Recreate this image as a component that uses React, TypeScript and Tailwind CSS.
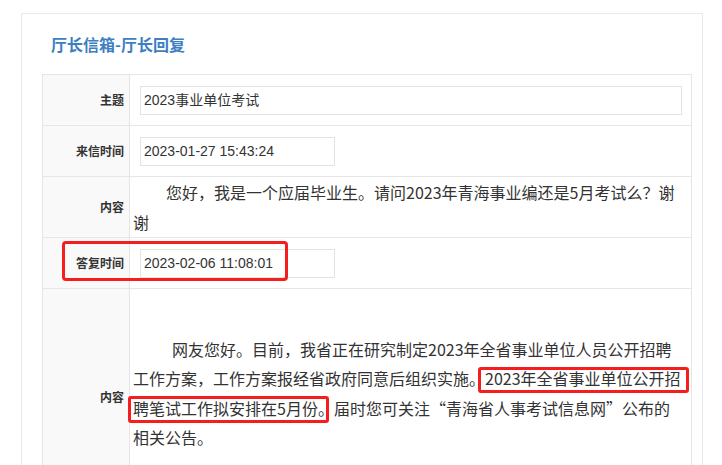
const font = "font-['Noto_Sans_CJK_SC','Liberation_Sans',sans-serif]";

function Label({ children }: { children: React.ReactNode }) {
  return (
    <div className="flex items-center justify-end border-r border-[#e6e6e6] bg-[#f9f9f9] pr-[5px] text-[12px] font-bold text-[#333]">
      {children}
    </div>
  );
}

function Field({ value, width }: { value: string; width: string }) {
  return (
    <div className="flex items-center pl-[10px] pr-[9px]">
      <div
        className={`flex h-[29px] items-center border border-[#e3e3e3] bg-white pl-[3px] font-['Liberation_Sans','Noto_Sans_CJK_SC',sans-serif] text-[14px] text-[#333] ${width}`}
      >
        {value}
      </div>
    </div>
  );
}

export default function App() {
  return (
    <div className={`relative h-[465px] w-[722px] overflow-hidden bg-white ${font}`}>
      <div className="ml-[21px] mr-[19px] mt-[13px] h-[600px] border border-[#e3ebf3]">
        {/* Title */}
        <div className="flex h-[60px] items-center pl-[29px] text-[16px] font-bold text-[#3d7fc1]">
          厅长信箱-厅长回复
        </div>

        {/* Table */}
        <div className="ml-[20px] mr-[10px] border-x border-t border-[#e6e6e6]">
          <div className="grid h-[51px] grid-cols-[87px_1fr] border-b border-[#e6e6e6]">
            <Label>主题</Label>
            <Field value="2023事业单位考试" width="w-full" />
          </div>

          <div className="grid h-[51px] grid-cols-[87px_1fr] border-b border-[#e6e6e6]">
            <Label>来信时间</Label>
            <Field value="2023-01-27 15:43:24" width="w-[195px]" />
          </div>

          <div className="grid grid-cols-[87px_1fr] border-b border-[#e6e6e6]">
            <Label>内容</Label>
            <div className="pl-[3px] pr-[6px] text-[16px] leading-[30px] text-[#333]">
              <p className="indent-[33px]">
                您好，我是一个应届毕业生。请问2023年青海事业编还是5月考试么？谢谢
              </p>
            </div>
          </div>

          <div className="grid h-[51px] grid-cols-[87px_1fr] border-b border-[#e6e6e6]">
            <Label>答复时间</Label>
            <Field value="2023-02-06 11:08:01" width="w-[195px]" />
          </div>

          <div className="grid grid-cols-[87px_1fr] border-b border-[#e6e6e6]">
            <Label>内容</Label>
            <div className="pb-[52px] pl-[3px] pr-[6px] pt-[46px] text-[16px] leading-[29.3px] text-[#333]">
              <p className="indent-[39px]">
                网友您好。目前，我省正在研究制定2023年全省事业单位人员公开招聘工作方案，工作方案报经省政府同意后组织实施。2023年全省事业单位公开招聘笔试工作拟安排在5月份。届时您可关注“青海省人事考试信息网”公布的相关公告。
              </p>
            </div>
          </div>
        </div>
      </div>

      {/* Red annotation marks */}
      <div className="absolute left-[62px] top-[241px] h-[40px] w-[226px] rounded-[4px] border-[3px] border-[#f51d1d]" />
      <div className="absolute left-[478px] top-[367px] h-[26px] w-[211px] rounded-[3px] border-[3px] border-[#f51d1d]" />
      <div className="absolute left-[128px] top-[396px] h-[27px] w-[201px] rounded-[3px] border-[3px] border-[#f51d1d]" />
    </div>
  );
}
